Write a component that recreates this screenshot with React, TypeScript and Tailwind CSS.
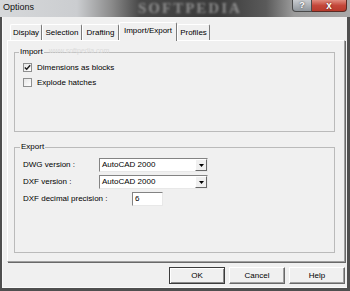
import React from 'react';

const font = { fontFamily: '"Liberation Sans", Arial, sans-serif' };

const tabs = [
  { label: 'Display', w: 'w-[32px]' },
  { label: 'Selection', w: 'w-[40px]' },
  { label: 'Drafting', w: 'w-[37px]' },
  { label: 'Import/Export', w: 'w-[58px]', active: true },
  { label: 'Profiles', w: 'w-[33px]' },
];

const Check = ({ checked }: { checked?: boolean }) => (
  <span className="w-[9px] h-[9px] border border-[#8e8f8f] bg-[linear-gradient(135deg,#e6e6e6,#ffffff)] flex items-center justify-center shrink-0">
    {checked && (
      <svg width="7" height="7" viewBox="0 0 7 7">
        <path d="M0.8 3.4 L2.7 5.3 L6.2 1.2" stroke="#1c1c1c" strokeWidth="1.4" fill="none" />
      </svg>
    )}
  </span>
);

const Combo = ({ value }: { value: string }) => (
  <div className="flex w-[109px] h-[14px] bg-white border border-t-[#838383] border-l-[#838383] border-r-[#e8e8e8] border-b-[#e8e8e8]">
    <span className="flex-1 pl-[2px] leading-[12px]">{value}</span>
    <span className="w-[12px] h-full bg-[#f0f0f0] border border-t-white border-l-white border-r-[#696969] border-b-[#696969] flex items-center justify-center">
      <svg width="5" height="3" viewBox="0 0 5 3">
        <path d="M0 0 H5 L2.5 3 Z" fill="#000" />
      </svg>
    </span>
  </div>
);

const Button = ({ label, primary }: { label: string; primary?: boolean }) => (
  <button
    className={
      primary
        ? 'w-[56px] h-[17px] bg-[#f0f0f0] border border-[#3c3c3c] shadow-[inset_1px_1px_0_#fff,inset_-1px_-1px_0_#8a8a8a] text-[8px] leading-[15px] text-center'
        : 'w-[56px] h-[17px] bg-[#f0f0f0] border border-t-white border-l-white border-r-[#696969] border-b-[#696969] shadow-[inset_-1px_-1px_0_#a0a0a0] text-[8px] leading-[15px] text-center'
    }
  >
    {label}
  </button>
);

export default function App() {
  return (
    <div className="w-[350px] h-[291px] bg-[#4f4f4f] flex flex-col overflow-hidden text-[8px] text-black" style={font}>
      {/* title bar */}
      <div className="h-[17px] shrink-0 flex relative bg-[linear-gradient(90deg,#d6d8da_0%,#cbcdd0_22%,#8a8a8a_32%,#474747_40%,#3a3a3a_62%,#5a5a5a_76%,#9c9c9c_84%,#a9a9a9_100%)]">
        <span className="pl-[3px] pt-[2px] text-[9px] leading-[11px] text-[#111]">Options</span>
        <span className="absolute left-[138px] top-0 text-[15px] leading-[16px] font-bold tracking-[2px] text-[#bdbdbd] opacity-60 blur-[1px]" style={{ fontFamily: '"Liberation Serif", serif' }}>
          SOFTPEDIA
        </span>
        <div className="ml-auto mr-[3px] flex h-[12px]">
          <div className="w-[20px] h-full border border-[#4a4a4a] border-t-0 rounded-bl-[4px] bg-[linear-gradient(180deg,#c9ccd0,#8f959b)] flex items-center justify-center text-white text-[9px] font-bold leading-none [text-shadow:0_0_2px_#333]">
            ?
          </div>
          <div className="w-[35px] h-full border border-[#5a2a24] border-t-0 border-l-0 rounded-br-[4px] bg-[linear-gradient(180deg,#e08c7f,#c4473a_50%,#b83a2c)] flex items-center justify-center text-white text-[10px] font-bold leading-none [text-shadow:0_0_2px_#4a1a14]">
            x
          </div>
        </div>
      </div>

      {/* client */}
      <div className="flex-1 ml-[2px] mr-[3px] mb-[3px] bg-[#f0f0f0] border-l border-b border-[#fafafa] flex flex-col relative">
        <span className="absolute left-[46px] top-[29px] text-[7px] text-[#dadada]">www.softpedia.com</span>

        {/* tabs */}
        <div className="mt-[5px] ml-[4px] h-[18px] flex items-end pl-[3px] relative z-10">
          {tabs.map((t) =>
            t.active ? (
              <div
                key={t.label}
                className={`${t.w} h-[19px] -mb-[1px] bg-[#f0f0f0] border-t border-l border-white border-r border-r-[#7a7a7a] rounded-t-[2px] flex items-center justify-center pb-[2px]`}
              >
                {t.label}
              </div>
            ) : (
              <div
                key={t.label}
                className={`${t.w} h-[16px] border-t border-l border-white border-r border-r-[#7a7a7a] rounded-t-[2px] flex items-center justify-center`}
              >
                {t.label}
              </div>
            )
          )}
        </div>

        {/* panel */}
        <div className="ml-[4px] mr-[2px] h-[222px] border border-t-white border-l-white border-r-[#a0a0a0] border-b-[#a0a0a0] shadow-[1px_1px_0_#696969] flex flex-col">
          <fieldset className="ml-[6px] mt-[6px] w-[321px] h-[85px] border border-[#bababa] shrink-0">
            <legend className="ml-[4px] px-[1px] leading-[10px]">Import</legend>
            <div className="pl-[8px] pt-[3px] flex flex-col">
              <label className="h-[15px] flex items-center gap-[5px]">
                <Check checked />
                <span>Dimensions as blocks</span>
              </label>
              <label className="h-[15px] flex items-center gap-[5px]">
                <Check />
                <span>Explode hatches</span>
              </label>
            </div>
          </fieldset>

          <fieldset className="ml-[6px] mt-[10px] w-[321px] h-[111px] border border-[#bababa] shrink-0">
            <legend className="ml-[5px] px-[1px] leading-[10px]">Export</legend>
            <div className="pl-[8px] pt-[6px] flex flex-col gap-[3px]">
              <div className="flex items-center h-[14px]">
                <span className="w-[76px]">DWG version :</span>
                <Combo value="AutoCAD 2000" />
              </div>
              <div className="flex items-center h-[14px]">
                <span className="w-[76px]">DXF version :</span>
                <Combo value="AutoCAD 2000" />
              </div>
              <div className="flex items-center h-[14px]">
                <span className="w-[109px]">DXF decimal precision :</span>
                <div className="w-[31px] h-[14px] bg-white border border-t-[#838383] border-l-[#838383] border-r-[#e8e8e8] border-b-[#e8e8e8] pl-[2px] leading-[12px]">
                  6
                </div>
              </div>
            </div>
          </fieldset>
        </div>

        {/* buttons */}
        <div className="mt-[5px] mr-[2px] flex justify-end gap-[4px]">
          <Button label="OK" primary />
          <Button label="Cancel" />
          <Button label="Help" />
        </div>
      </div>
    </div>
  );
}
